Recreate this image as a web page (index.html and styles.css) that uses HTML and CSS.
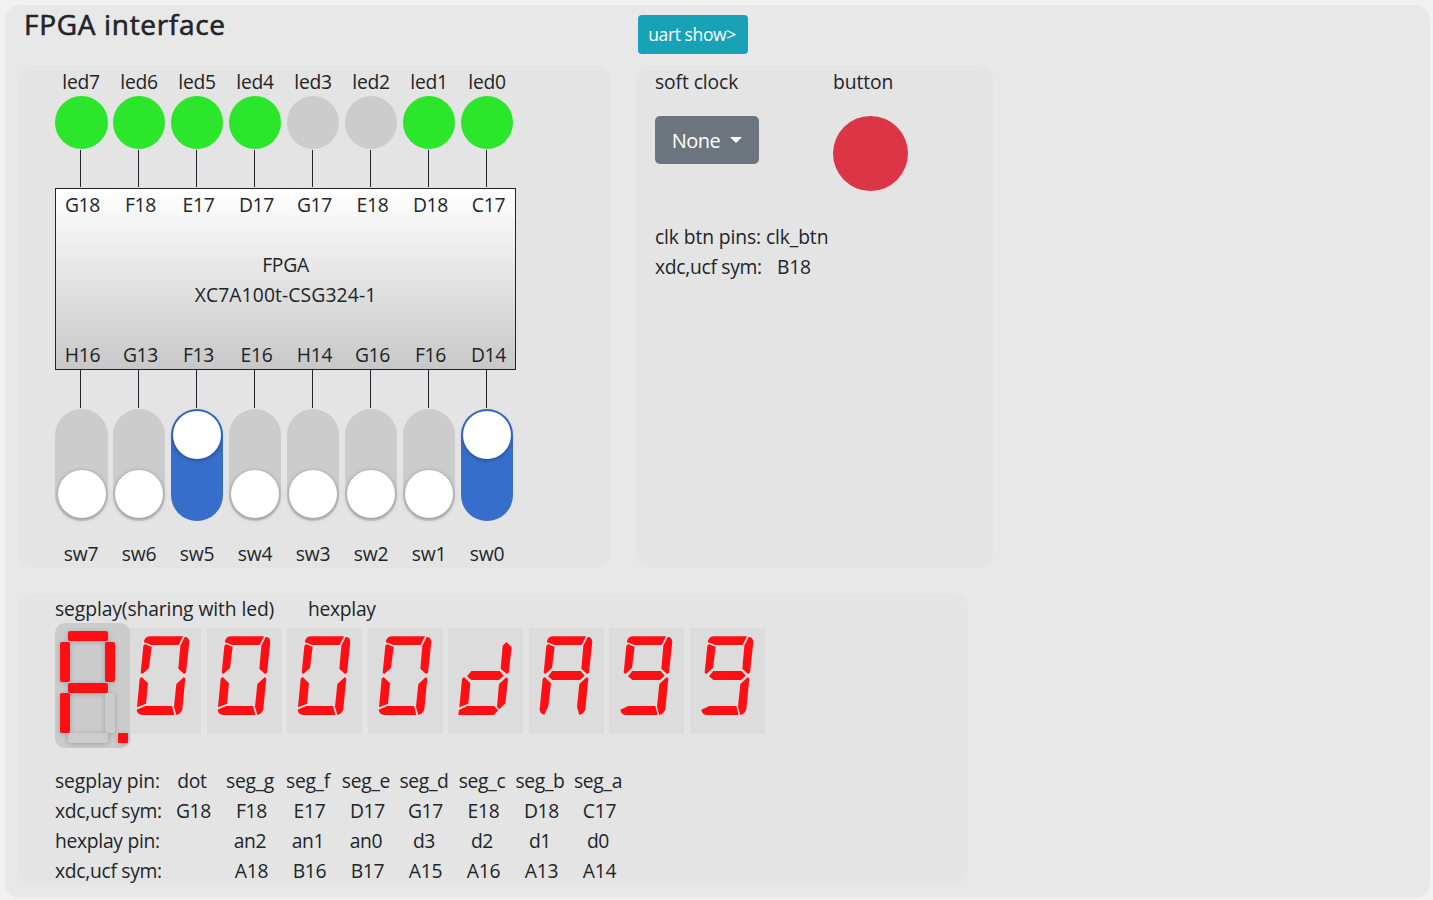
FILE: index.html
```html
<!DOCTYPE html>
<html lang="en">
<head>
<meta charset="utf-8">
<title>FPGA interface</title>
<link rel="stylesheet" href="styles.css">
</head>
<body>
<main class="board">
  <header class="head">
    <h1 class="title">FPGA interface</h1>
    <button class="uart">uart show&gt;</button>
  </header>

  <div class="top">
    <section class="panel io">
      <div class="cols labels"><span>led7</span><span>led6</span><span>led5</span><span>led4</span><span>led3</span><span>led2</span><span>led1</span><span>led0</span></div>
      <div class="cols leds"><i class="led on"></i><i class="led on"></i><i class="led on"></i><i class="led on"></i><i class="led"></i><i class="led"></i><i class="led on"></i><i class="led on"></i></div>
      <div class="cols wires up"><i></i><i></i><i></i><i></i><i></i><i></i><i></i><i></i></div>
      <div class="chip">
        <div class="cols pins"><span>G18</span><span>F18</span><span>E17</span><span>D17</span><span>G17</span><span>E18</span><span>D18</span><span>C17</span></div>
        <div class="model"><span>FPGA</span><span class="part">XC7A100t-CSG324-1</span></div>
        <div class="cols pins"><span>H16</span><span>G13</span><span>F13</span><span>E16</span><span>H14</span><span>G16</span><span>F16</span><span>D14</span></div>
      </div>
      <div class="cols wires down"><i></i><i></i><i></i><i></i><i></i><i></i><i></i><i></i></div>
      <div class="cols switches"><i class="sw"></i><i class="sw"></i><i class="sw on"></i><i class="sw"></i><i class="sw"></i><i class="sw"></i><i class="sw"></i><i class="sw on"></i></div>
      <div class="cols labels sw-labels"><span>sw7</span><span>sw6</span><span>sw5</span><span>sw4</span><span>sw3</span><span>sw2</span><span>sw1</span><span>sw0</span></div>
    </section>

    <section class="panel clock">
      <div class="controls">
        <div class="control"><span class="soft">soft clock</span><button class="select">None<i class="caret"></i></button></div>
        <div class="control"><span>button</span><button class="push" aria-label="button"></button></div>
      </div>
      <div class="clk-row btn-pins"><span class="clk-label">clk btn pins:</span><span>clk_btn</span></div>
      <div class="clk-row sym"><span class="clk-label">xdc,ucf sym:</span><span>B18</span></div>
    </section>
  </div>

  <section class="panel display">
    <div class="captions"><span class="seg-caption">segplay(sharing with led)</span><span>hexplay</span></div>
    <div class="digits">
      <div class="segplay">
        <i class="seg h a on"></i><i class="seg v f on"></i><i class="seg v b on"></i><i class="seg h g on"></i><i class="seg v e on"></i><i class="seg v c"></i><i class="seg h d"></i><i class="seg dot on"></i>
      </div>
      <svg class="hex" viewBox="0 0 225 318"><g id="zero"><path id="sa" d="M54 38Q59 25 72 25H171L158 51H76L54 43Z"/><path id="sb" d="M176 27Q188 26 190 41L180 134L174 138L157 122L163 53Z"/><path id="sf" d="M57 48L77 57L69 120L49 138L44 134L52 54Z"/><path d="M47 147L66 166L60 227L33 238L41 152Z"/><path d="M58 234H138L145 261H48Q34 259 32 245Z"/><path id="sc" d="M173 148L178 151L169 244Q165 258 151 261L144 236L151 168Z"/></g></svg>
      <svg class="hex" viewBox="0 0 225 318"><use href="#zero"/></svg>
      <svg class="hex" viewBox="0 0 225 318"><use href="#zero"/></svg>
      <svg class="hex" viewBox="0 0 225 318"><use href="#zero"/></svg>
      <svg class="hex" viewBox="0 0 225 318"><path d="M175 42L191 58L182 134L176 138L158 122L164 53Z"/><path id="sg" d="M70 129H155L167 143L153 156H70L57 145Z"/><path d="M48 147L67 166L61 227L34 238L42 152Z"/><path d="M58 234H138L151 247L137 261H31L33 246Z"/><path d="M175 148L180 152L172 226L154 244L147 236L153 168Z"/></svg>
      <svg class="hex" viewBox="0 0 225 318"><use href="#sa"/><use href="#sb"/><use href="#sf"/><use href="#sg"/><use href="#sc"/><path d="M47 147L66 166L58 234L46 260Q32 258 32 244L41 152Z"/></svg>
      <svg class="hex" viewBox="0 0 225 318"><g id="nine"><use href="#sa"/><use href="#sb"/><use href="#sf"/><use href="#sg"/><use href="#sc"/><path d="M34 245L58 234H139L146 261H49Q36 259 34 245Z"/></g></svg>
      <svg class="hex" viewBox="0 0 225 318"><use href="#nine"/></svg>
    </div>
    <div class="map">
      <div class="map-row"><span class="name pin-name">segplay pin:</span><span>dot</span><span>seg_g</span><span>seg_f</span><span>seg_e</span><span>seg_d</span><span>seg_c</span><span>seg_b</span><span>seg_a</span></div>
      <div class="map-row syms"><span class="name">xdc,ucf sym:</span><span>G18</span><span>F18</span><span>E17</span><span>D17</span><span>G17</span><span>E18</span><span>D18</span><span>C17</span></div>
      <div class="map-row"><span class="name">hexplay pin:</span><span></span><span>an2</span><span>an1</span><span>an0</span><span>d3</span><span>d2</span><span>d1</span><span>d0</span></div>
      <div class="map-row syms"><span class="name">xdc,ucf sym:</span><span></span><span>A18</span><span>B16</span><span>B17</span><span>A15</span><span>A16</span><span>A13</span><span>A14</span></div>
    </div>
  </section>
</main>
</body>
</html>
```
FILE: styles.css
```css
* { box-sizing: border-box; }
body {
  margin: 0;
  padding: 5px 3px 2px 5px;
  height: 900px;
  overflow: hidden;
  background: #f1f1f1;
  color: #212529;
  font: 19.3px/30px "Segoe UI", "Open Sans", "Noto Sans", sans-serif;
  letter-spacing: -0.3px;
}
button { border: 0; font: inherit; letter-spacing: inherit; color: #fff; white-space: nowrap; }
i { display: block; }
.board { height: 893px; padding-left: 13px; border-radius: 15px; background: #e8e8e8; }
.head { display: flex; height: 61px; }
.title { width: 614px; margin: 1px 0 0; padding-left: 6px; font-size: 28px; font-weight: 500; line-height: 36px; letter-spacing: 0.68px; -webkit-text-stroke: 0.6px #212529; }
.uart { margin-top: 10px; margin-left: 6px; width: 110px; height: 39px; padding: 0 2px 2px 0; border-radius: 4px; background: #17a2b8; font-size: 17.5px; letter-spacing: -0.4px; }
.panel { border-radius: 15px; background: #e4e4e4; }
.top { display: flex; gap: 25px; height: 502px; }
.io { width: 593px; padding-left: 37px; }
.cols { display: grid; grid-template-columns: repeat(8, 52px); column-gap: 6px; }
.labels, .pins { text-align: center; }
.labels { height: 30px; padding-top: 1px; }
.led { width: 52px; height: 53px; border-radius: 50%; background: #ccc; }
.led:first-child, .sw:first-child { width: 53px; }
.led.on { background: #2be62b; }
.wires i { width: 1px; margin-left: 25px; background: #212529; }
.wires.up { height: 39px; padding: 1px 0; }
.wires.down { height: 39px; padding-bottom: 1px; }
.chip { width: 461px; height: 182px; border: 1px solid #212529; background: linear-gradient(#fff, #c8c8c8); display: flex; flex-direction: column; justify-content: space-between; padding-top: 1px; }
.model { display: flex; flex-direction: column; align-items: center; }
.part { letter-spacing: 0.12px; }
.sw { width: 52px; height: 112px; border-radius: 27px; background: #ccc; padding: 61px 2px 0; }
.sw:first-child { padding-left: 3px; }
.sw::before { content: ""; display: block; width: 48px; height: 48px; border-radius: 50%; background: #fff; box-shadow: 0 1px 4px rgba(0, 0, 0, .35); }
.sw:not(.on)::before { height: 47.5px; }
.sw.on { background: #376ecb; padding: 2px 2px 0; }
.chip .pins { margin-left: 0.5px; }
.chip .pins:last-child { height: 29px; }
.sw-labels { margin-top: 17px; }
.clock { width: 357px; padding-left: 19px; }
.controls { display: flex; height: 155px; }
.control { flex: none; width: 178px; padding-top: 1px; display: flex; flex-direction: column; }
.control > span { letter-spacing: -0.1px; }
.select { width: 104px; height: 48px; margin-top: 19px; padding: 2px 0 0; border-radius: 5px; background: #6c757d; font-size: 20px; display: flex; align-items: center; justify-content: center; gap: 10px; letter-spacing: -0.5px; }
.caret { border: 6px solid transparent; border-top-color: #fff; border-bottom: 0; margin-bottom: 2px; }
.push { width: 75px; height: 75px; margin-top: 19px; border-radius: 50%; background: #dc3545; }
.clk-row { display: flex; padding-top: 1px; height: 30px; }
.clk-label { width: 111px; }
.btn-pins { letter-spacing: -0.12px; }
.sym .clk-label { width: 122px; }
.display { width: 950px; height: 292px; margin-top: 25px; padding-left: 37px; }
.captions { display: flex; height: 30px; padding-top: 1px; }
.seg-caption { width: 253px; letter-spacing: -0.1px; }
.digits { display: flex; height: 143px; }
.hex { width: 75px; height: 106px; margin: 5px 5.5px 0 0; background: #dcdcdc; fill: #ff0f14; flex: none; }
.segplay { position: relative; z-index: 1; flex: none; width: 75px; height: 125px; margin-right: -4px; border-radius: 10px; background: #cbcbcb; }
.seg { position: absolute; border-radius: 2px; background: #ccc; box-shadow: 0 1px 5px rgba(0, 0, 0, .22); }
.seg.on { background: #ff0f14; }
.h { width: 40px; height: 10px; left: 13px; }
.v { width: 10px; height: 40px; }
.a { top: 8px; }
.g { top: 60px; }
.d { top: 110px; }
.f { left: 5px; top: 19px; }
.b { left: 50px; top: 19px; }
.e { left: 5px; top: 70px; }
.c { left: 50px; top: 70px; }
.dot { width: 10px; height: 10px; left: 63px; top: 110px; border-radius: 1px; }
.map-row { display: grid; grid-template-columns: 108px repeat(8, 58px); text-align: center; height: 30px; }
.map-row .name { text-align: left; white-space: nowrap; }
.map-row .pin-name { letter-spacing: -0.1px; }
.syms span:not(.name) { padding-left: 3px; }
```
